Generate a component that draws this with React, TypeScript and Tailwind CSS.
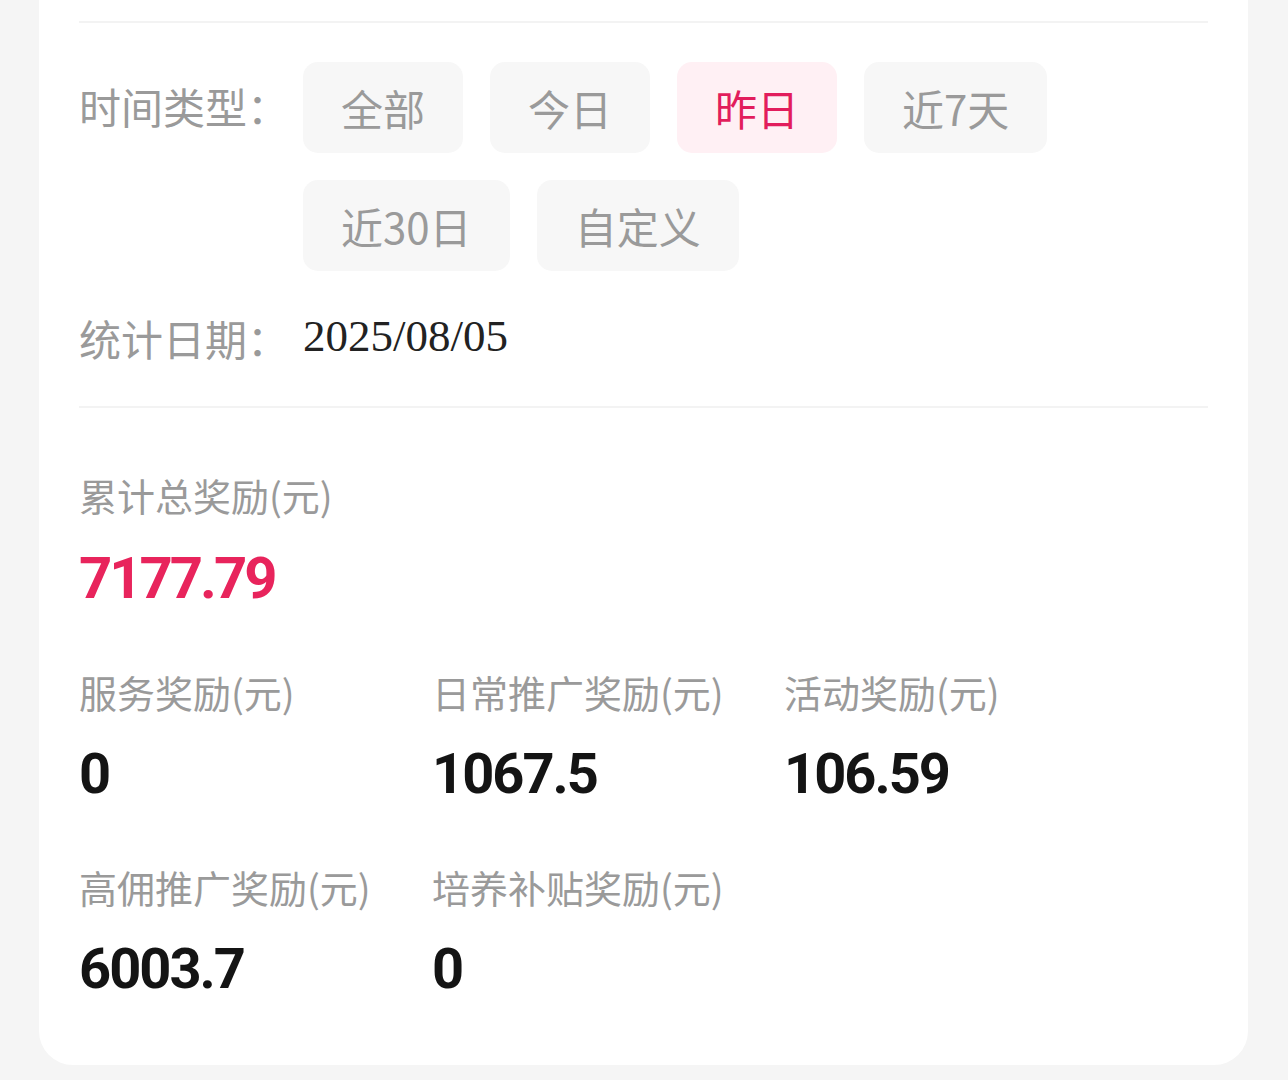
import React from 'react';

const cjk = { fontFamily: '"Noto Sans CJK SC", "Noto Sans", sans-serif' };
const num = { fontFamily: 'Roboto, "Liberation Sans", sans-serif' };

const timeTypes = ['全部', '今日', '昨日', '近7天', '近30日', '自定义'];

const stats = [
  { label: '服务奖励(元)', value: '0' },
  { label: '日常推广奖励(元)', value: '1067.5' },
  { label: '活动奖励(元)', value: '106.59' },
  { label: '高佣推广奖励(元)', value: '6003.7' },
  { label: '培养补贴奖励(元)', value: '0' },
];

const App: React.FC = () => {
  const active = '昨日';

  return (
    <div className="min-h-[1080px] bg-[#f5f5f5] pl-[39px] pr-[40px]" style={cjk}>
      <div className="bg-white rounded-b-[34px] px-[40px] pt-[21px] pb-[66px]">
        <div className="h-[2px] bg-[#f3f3f3]" />

        {/* time type filter */}
        <div className="mt-[39px] flex items-start">
          <div className="w-[224px] h-[91px] pb-[4px] flex items-center text-[42px] text-[#9a9a9a] shrink-0">
            时间类型：
          </div>
          <div className="flex flex-wrap gap-[27px] w-[800px]">
            {timeTypes.map((t) => (
              <button
                key={t}
                className={`h-[91px] px-[38px] rounded-[15px] text-[42px] leading-none flex items-center ${
                  t === active ? 'bg-[#fff0f4] text-[#e21d5c]' : 'bg-[#f7f7f7] text-[#9a9a9a]'
                }`}
              >
                {t}
              </button>
            ))}
          </div>
        </div>

        {/* stat date */}
        <div className="mt-[35px] h-[62px] flex items-center">
          <div className="w-[224px] text-[42px] text-[#9a9a9a] shrink-0">统计日期：</div>
          <div className="text-[45px] text-[#222]" style={{ fontFamily: '"Liberation Serif", serif' }}>
            2025/08/05
          </div>
        </div>

        <div className="mt-[38px] h-[2px] bg-[#f3f3f3]" />

        {/* total */}
        <div className="mt-[62px] text-[38px] leading-[50px] text-[#9a9a9a]">累计总奖励(元)</div>
        <div
          className="mt-[23px] text-[58px] leading-[70px] font-bold tracking-[-3px] text-[#e8245c]"
          style={num}
        >
          7177.79
        </div>

        {/* breakdown */}
        <div className="mt-[54px] grid grid-cols-[353px_352px_352px] gap-y-[58px]">
          {stats.map((s) => (
            <div key={s.label}>
              <div className="text-[38px] leading-[50px] text-[#9a9a9a] whitespace-nowrap">{s.label}</div>
              <div
                className="mt-[27px] text-[56px] leading-[60px] font-bold tracking-[-2px] text-[#141414]"
                style={num}
              >
                {s.value}
              </div>
            </div>
          ))}
        </div>
      </div>
    </div>
  );
};

export default App;
